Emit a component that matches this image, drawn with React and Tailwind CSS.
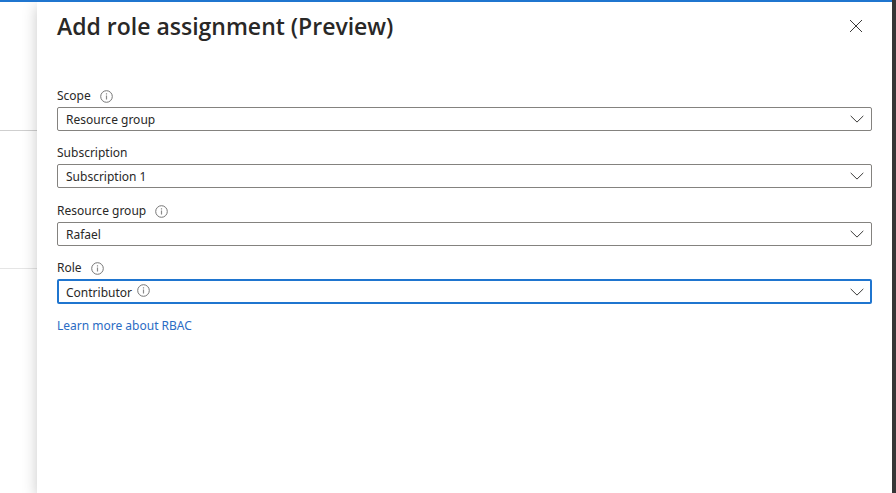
import React from "react";

function InfoIcon({ className = "" }) {
  return (
    <svg viewBox="0 0 13 13" className={"h-[13px] w-[13px] shrink-0 " + className} fill="none" stroke="#767676" aria-hidden="true">
      <circle cx="6.5" cy="6.5" r="5.8" />
      <path d="M6.5 5.5v4M6.5 3.2v1.3" stroke="#8a8a8a" strokeWidth="1.2" />
    </svg>
  );
}

function Chevron() {
  return (
    <svg viewBox="0 0 14 8" className="pointer-events-none absolute right-2 top-1/2 h-2 w-[14px] -translate-y-1/2" fill="none" stroke="#3b3a39" aria-hidden="true">
      <path d="M0.7 0.9 7 7.1 13.3 0.9" />
    </svg>
  );
}

function Field({ id, label, value, info, active, children }) {
  return (
    <div>
      <div className="flex items-center gap-[9px] pb-px leading-5">
        <label htmlFor={id}>{label}</label>
        {info && <InfoIcon />}
      </div>
      <div className="relative">
        <select
          id={id}
          className={
            "block w-full appearance-none rounded-[2px] bg-white pt-0.5 outline-none " +
            (active ? "h-[25px] border-2 border-[#1f75cf] pl-[7px]" : "h-6 border border-[#84827f] pl-2")
          }
        >
          <option>{value}</option>
        </select>
        {children}
        <Chevron />
      </div>
    </div>
  );
}

export default function App() {
  return (
    <div className="flex min-h-screen bg-white font-['Noto_Sans','Open_Sans',sans-serif] text-[12px] leading-5 text-[#292827]">
      <div className="flex min-w-0 flex-1 border-t-2 border-[#1f75cf]">
        <div className="w-[37px] shrink-0">
          <div className="h-[129px] border-b border-[#cfcfcf]" />
          <div className="h-[138px] border-b border-[#e5e5e5]" />
        </div>
        <main className="relative min-w-0 flex-1 bg-white px-5 shadow-[0_4px_14px_rgba(0,0,0,0.22)] [clip-path:inset(0_0_0_-37px)]">
          <header className="flex items-center justify-between pr-[9px] pt-2">
            <h1 className="font-['Open_Sans','Noto_Sans',sans-serif] text-[23px] font-semibold leading-8">Add role assignment (Preview)</h1>
            <button type="button" aria-label="Close" className="flex h-[14px] w-[14px] items-center justify-center">
              <svg viewBox="0 0 14 14" className="h-[14px] w-[14px]" fill="none" stroke="#3b3a39">
                <path d="M1 1l12 12M13 1 1 13" />
              </svg>
            </button>
          </header>
          <form className="flex flex-col gap-[13px] pt-11">
            <div className="flex flex-col gap-3">
              <Field id="scope" label="Scope" value="Resource group" info />
              <Field id="subscription" label="Subscription" value="Subscription 1" />
            </div>
            <div className="flex flex-col gap-3">
              <Field id="group" label="Resource group" value="Rafael" info />
              <Field id="role" label="Role" value="Contributor" info active>
                <InfoIcon className="absolute left-20 top-[5px]" />
              </Field>
            </div>
          </form>
          <a href="#rbac" className="mt-3 inline-block text-[#2b6cc4]">Learn more about RBAC</a>
        </main>
      </div>
      <div className="w-1 shrink-0 bg-[#363636]" />
    </div>
  );
}
